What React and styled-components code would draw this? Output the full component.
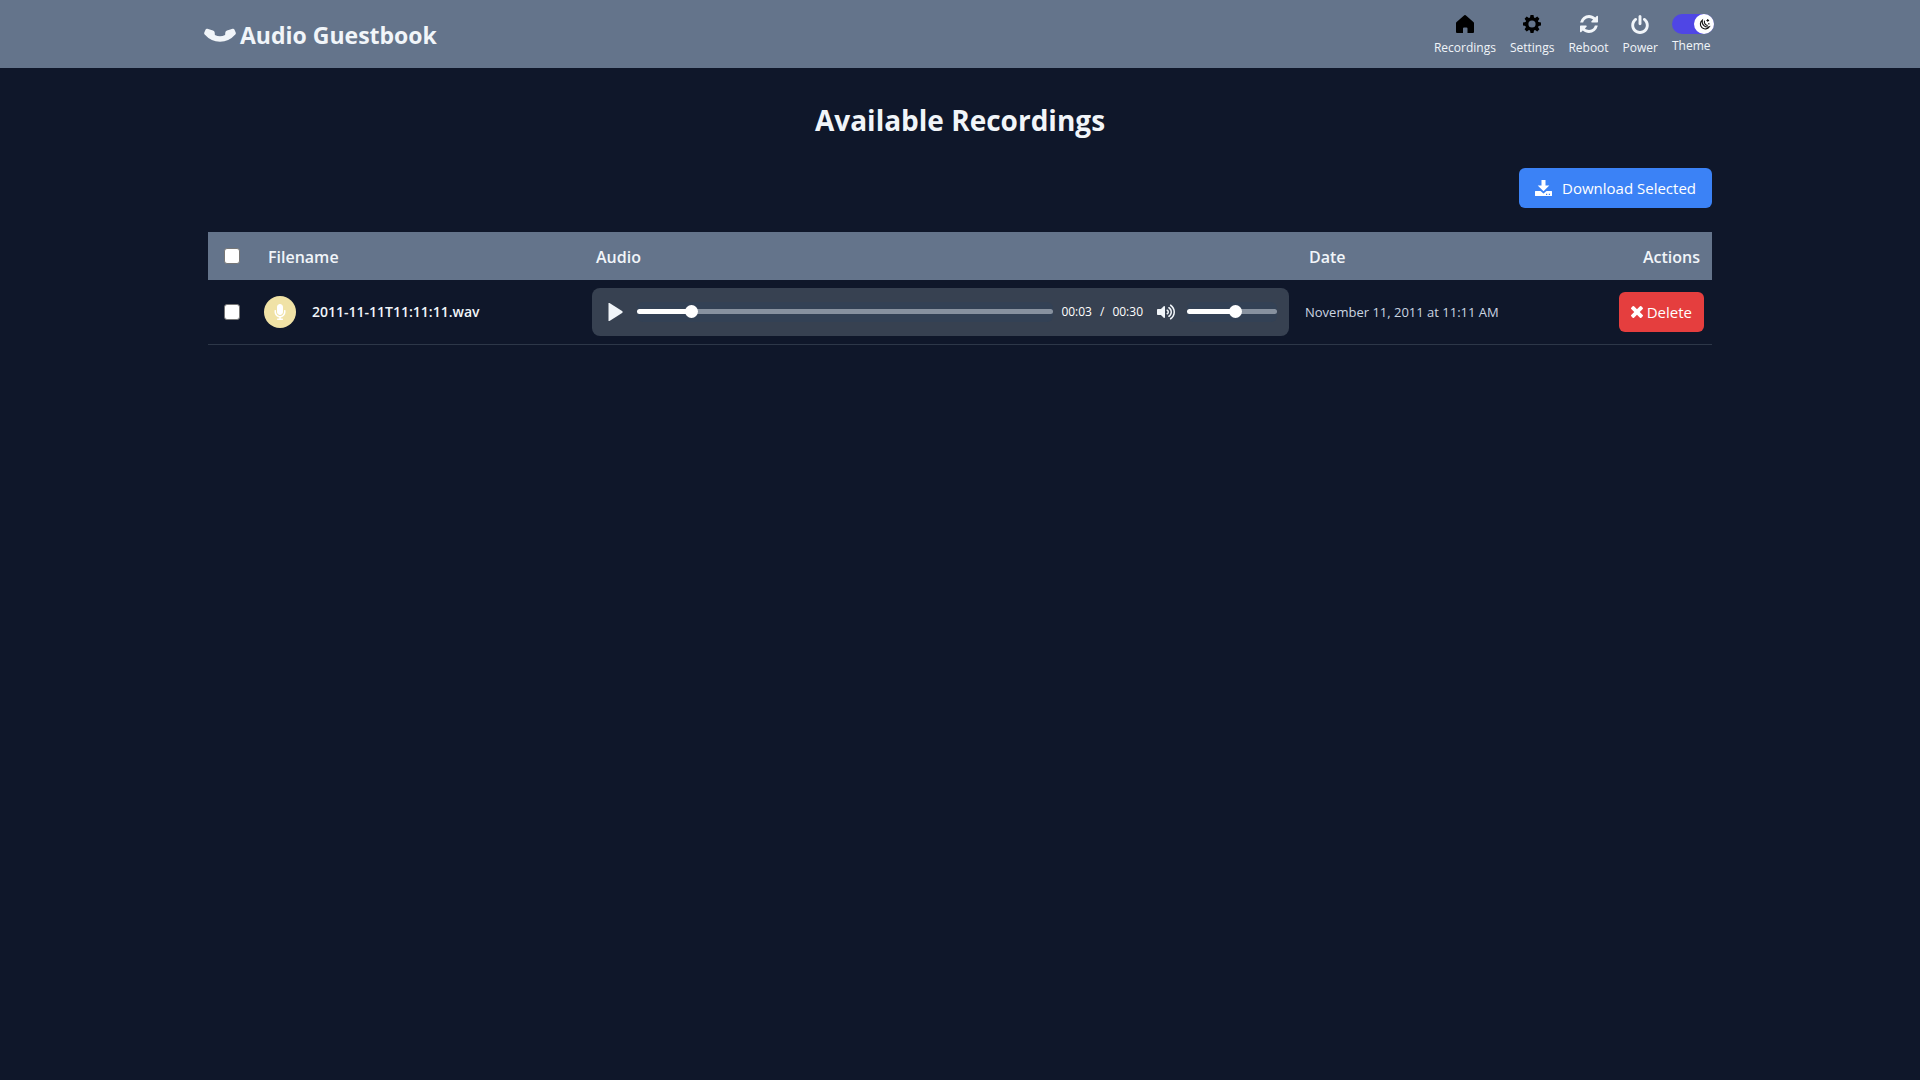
import React, { useState } from "react";
import styled, { createGlobalStyle, css } from "styled-components";
import { FaMicrophone, FaVolumeUp } from "react-icons/fa";

const Global = createGlobalStyle`
  *, *::before, *::after { box-sizing: border-box; }
  body {
    margin: 0;
    background: #0f172a;
    color: #f1f5f9;
    font-family: "Segoe UI", "Open Sans", "Noto Sans", sans-serif;
    font-size: 16px;
    line-height: 24px;
  }
  button { font: inherit; color: inherit; border: 0; cursor: pointer; }
`;

const Header = styled.header`
  background: #64748b;
  padding: 12px 0;
`;

const HeaderInner = styled.div`
  display: flex;
  align-items: center;
  justify-content: space-between;
  max-width: 1536px;
  margin: 0 auto;
  padding: 0 14px 0 12px;
`;

const Brand = styled.a`
  display: flex;
  align-items: center;
  gap: 4px;
  padding-top: 2px;
  color: #f1f5f9;
  font-size: 23px;
  font-weight: 700;
  line-height: 32px;
  text-decoration: none;
`;

const Nav = styled.nav`
  display: flex;
  align-items: flex-start;
  gap: 14px;
`;

const navItem = css`
  display: flex;
  flex-direction: column;
  align-items: center;
  gap: 4px;
  padding: 0;
  background: none;
  color: #f1f5f9;
  font-size: 12px;
  line-height: 16px;
  text-decoration: none;
`;
const NavLink = styled.a`${navItem}`;
const NavButton = styled.button`
  && {
    ${navItem}
  }
`;
const ThemeItem = styled.label`
  ${navItem}
  position: relative;
  align-items: flex-start;
  gap: 2px;
  cursor: pointer;
`;
const IconSlot = styled.span`
  display: flex;
  align-items: center;
  justify-content: center;
  height: 24px;
  color: ${(p) => (p.$dark ? "#000" : "inherit")};
`;

const SwitchTrack = styled.span`
  display: flex;
  justify-content: ${(p) => (p.$on ? "flex-end" : "flex-start")};
  width: 42px;
  height: 20px;
  border-radius: 10px;
  background: ${(p) => (p.$on ? "#4f46e5" : "#e5e7eb")};
`;
const SwitchKnob = styled.span`
  display: grid;
  place-items: center;
  width: 20px;
  height: 20px;
  border-radius: 50%;
  background: #fff;
  color: #111;
`;
const HiddenCheck = styled.input`
  position: absolute;
  opacity: 0;
  width: 1px;
  height: 1px;
  margin: 0;
`;

const Main = styled.main`
  max-width: 1536px;
  margin: 0 auto;
  padding: 32px 16px;
`;

const Title = styled.h1`
  margin: 0 0 28px;
  font-size: 28px;
  font-weight: 700;
  line-height: 40px;
  text-align: center;
`;

const Toolbar = styled.div`
  display: flex;
  justify-content: flex-end;
  margin-bottom: 24px;
`;

const Button = styled.button`
  display: inline-flex;
  align-items: center;
  gap: ${(p) => (p.$danger ? 4 : 10)}px;
  height: 40px;
  padding: 0 ${(p) => (p.$danger ? 12 : 16)}px;
  border-radius: 6px;
  background: ${(p) => (p.$danger ? "#e53e3e" : "#3b82f6")};
  && { color: #fff; font-size: 15px; }
`;

const Table = styled.table`
  width: 100%;
  table-layout: fixed;
  border-collapse: collapse;
`;
const Col = styled.col`
  width: ${(p) => p.$w};
`;
const Th = styled.th`
  height: 48px;
  padding: 2px 12px 0;
  background: #64748b;
  font-weight: 600;
  text-align: ${(p) => p.$align || "left"};
`;
const CheckTh = styled(Th)`
  padding: 0 8px;
`;
const Td = styled.td`
  height: 64px;
  padding: 0 8px;
  border-bottom: 1px solid #2d3748;
  text-align: ${(p) => p.$align || "left"};
`;
const Check = styled.input`
  display: block;
  width: 16px;
  height: 16px;
  margin: 0 auto;
  appearance: none;
  border: 1px solid #767676;
  border-radius: 3px;
  background: #fff;
  &:checked { background: #3b82f6; }
`;
const FileCell = styled.div`
  display: flex;
  align-items: center;
  gap: 16px;
  font-size: 14px;
  font-weight: 600;
`;
const Avatar = styled.span`
  display: grid;
  place-items: center;
  width: 32px;
  height: 32px;
  border-radius: 50%;
  background: #f0e2a6;
  color: #fff;
`;
const DateText = styled.time`
  color: #cbd5e1;
  font-size: 13px;
`;

const Player = styled.div`
  display: flex;
  align-items: center;
  height: 48px;
  padding: 0 12px 0 16px;
  border-radius: 8px;
  background: #374151;
`;
const IconButton = styled.button`
  display: grid;
  place-items: center;
  padding: 0;
  background: none;
`;
const Slider = styled.input`
  flex: ${(p) => (p.$fixed ? "0 0 90px" : "1 1 0")};
  min-width: 0;
  height: 20px;
  margin: 0 ${(p) => (p.$fixed ? 0 : 8)}px 0 ${(p) => (p.$fixed ? 12 : 14)}px;
  appearance: none;
  border-radius: 6px;
  background: #334155;
  &::-webkit-slider-runnable-track {
    height: 5px;
    border-radius: 3px;
    background: linear-gradient(to right, #fff var(--fill), #87919f var(--fill));
  }
  &::-webkit-slider-thumb {
    appearance: none;
    width: 13px;
    height: 13px;
    margin-top: -4px;
    border-radius: 50%;
    background: #fff;
  }
`;
const Time = styled.span`
  display: flex;
  gap: 8px;
  margin-right: 14px;
  color: #fff;
  font-size: 12px;
`;

function Glyph({ width = 18, height = 18, box, children }) {
  return (
    <svg width={width} height={height} viewBox={box} fill="currentColor" aria-hidden="true">
      {children}
    </svg>
  );
}

const HomeIcon = () => (
  <Glyph box="0 0 18 18">
    <path d="M8.300.300Q9-.3 9.700.300L17.400 7Q18 7.500 18 8.300V17Q18 18 17 18H11.500V13.500Q11.500 12.500 10.500 12.500H8Q7 12.500 7 13.500V18H1Q0 18 0 17V8.300Q0 7.500.600 7Z" />
  </Glyph>
);

const GearIcon = () => (
  <Glyph box="-9 -9 18 18">
    {[0, 45, 90, 135].map((angle) => (
      <path key={angle} transform={`rotate(${angle})`} d="M-1.500-9H1.500L2.200-5.500H-2.200ZM-1.500 9H1.500L2.200 5.500H-2.200Z" />
    ))}
    <circle r="5.200" fill="none" stroke="currentColor" strokeWidth="3.200" />
  </Glyph>
);

const RefreshIcon = () => (
  <Glyph box="0 0 1536 1536">
    <path d="M1511 928q0 5-1 7-64 268-268 434.500t-478 166.500q-146 0-282.500-55t-243.500-157l-129 129q-19 19-45 19t-45-19-19-45v-448q0-26 19-45t45-19h448q26 0 45 19t19 45-19 45l-137 137q71 66 161 102t187 36q134 0 250-65t186-179q11-17 53-117 8-23 30-23h192q13 0 22.500 9.500t9.500 22.500zm25-800v448q0 26-19 45t-45 19h-448q-26 0-45-19t-19-45 19-45l138-138q-148-137-349-137-134 0-250 65t-186 179q-11 17-53 117-8 23-30 23h-199q-13 0-22.500-9.500t-9.500-22.500v-7q65-268 270-434.500t480-166.500q146 0 284 55.500t245 156.500l130-129q19-19 45-19t45 19 19 45z" />
  </Glyph>
);

const PowerIcon = () => (
  <Glyph height={19} box="0 0 1536 1664">
    <path d="M1536 896q0 156-61 298t-164 245-245 164-298 61-298-61-245-164-164-245-61-298q0-182 80.500-343t226.500-270q43-32 95.500-25t83.500 50q32 42 24.500 94.500t-49.500 84.500q-98 74-151.500 181t-53.500 228q0 104 40.500 198.500t109.500 163.500 163.500 109.500 198.500 40.500 198.500-40.500 163.500-109.500 109.500-163.500 40.500-198.500q0-121-53.500-228t-151.500-181q-42-32-49.500-84.500t24.500-94.500q31-43 84-50t95 25q146 109 226.500 270t80.500 343zm-640-768v640q0 52-38 90t-90 38-90-38-38-90v-640q0-52 38-90t90-38 90 38 38 90z" />
  </Glyph>
);

const MoonIcon = () => (
  <svg width="13" height="13" viewBox="0 0 24 24" fill="none" stroke="currentColor" strokeWidth="2" aria-hidden="true">
    <path d="M8 4a9 9 0 1 0 13 12A10 10 0 0 1 8 4ZM12 5a7 7 0 0 0 6 9M18 2v5M15.500 4.500h5M20 9v3" />
  </svg>
);

const DownloadIcon = () => (
  <Glyph width={17} height={16} box="0 0 17 16">
    <path d="M6.500 0H10.500V5.500H14.300L8.500 11.300 2.700 5.500H6.500Z" />
    <path fillRule="evenodd" d="M.5 11H5.500L8.500 13.500 11.500 11H16.500Q17 11 17 11.500V15.500Q17 16 16.500 16H.5Q0 16 0 15.500V11.500Q0 11 .5 11ZM11 13.700V14.900H12.200V13.700ZM13.800 13.700V14.900H15V13.700Z" />
  </Glyph>
);

const CrossIcon = () => (
  <Glyph width={12} height={12} box="110 366 1188 1188">
    <path d="M1298 1254q0 40-28 68l-136 136q-28 28-68 28t-68-28l-294-294-294 294q-28 28-68 28t-68-28l-136-136q-28-28-28-68t28-68l294-294-294-294q-28-28-28-68t28-68l136-136q28-28 68-28t68 28l294 294 294-294q28-28 68-28t68 28l136 136q28 28 28 68t-28 68l-294 294 294 294q28 28 28 68z" transform="translate(0 68)" />
  </Glyph>
);

const PlayIcon = () => (
  <Glyph width={15} box="0 0 15 18">
    <path d="M.5 0 1.500 0 14.500 8.300V9.700L1.500 18H.5Z" />
  </Glyph>
);

const Handset = () => (
  <Glyph width={32} height={14} box="0 0 32 14">
    <path d="M3.400.8 9 2.500Q10.500 3 10.700 4.500L10.900 7Q16 9.600 21.100 7L21.300 4.500Q21.500 3 23 2.500L28.600.8Q29.800.4 30.400 1.500L31.600 4.300Q32.200 5.500 31.300 6.600Q25 13.800 16 13.800T.7 6.600Q-.2 5.500.4 4.300L1.600 1.500Q2.200.4 3.400.8Z" />
  </Glyph>
);

export default function App() {
  const [dark, setDark] = useState(true);
  const [position, setPosition] = useState(12);
  const [volume, setVolume] = useState(55);
  return (
    <>
      <Global />
      <Header>
        <HeaderInner>
          <Brand href="#"><Handset />Audio Guestbook</Brand>
          <Nav>
            <NavLink href="#recordings"><IconSlot $dark><HomeIcon /></IconSlot>Recordings</NavLink>
            <NavLink href="#settings"><IconSlot $dark><GearIcon /></IconSlot>Settings</NavLink>
            <NavButton type="button"><IconSlot><RefreshIcon /></IconSlot>Reboot</NavButton>
            <NavButton type="button"><IconSlot><PowerIcon /></IconSlot>Power</NavButton>
            <ThemeItem>
              <HiddenCheck type="checkbox" checked={dark} onChange={(e) => setDark(e.target.checked)} />
              <IconSlot>
                <SwitchTrack $on={dark}>
                  <SwitchKnob><MoonIcon /></SwitchKnob>
                </SwitchTrack>
              </IconSlot>
              Theme
            </ThemeItem>
          </Nav>
        </HeaderInner>
      </Header>
      <Main>
        <Title>Available Recordings</Title>
        <Toolbar>
          <Button type="button"><DownloadIcon />Download Selected</Button>
        </Toolbar>
        <Table>
          <colgroup>
            <Col $w="48px" /><Col $w="328px" /><Col /><Col $w="303px" /><Col $w="112px" />
          </colgroup>
          <thead>
            <tr>
              <CheckTh><Check type="checkbox" aria-label="Select all recordings" /></CheckTh>
              <Th>Filename</Th>
              <Th>Audio</Th>
              <Th>Date</Th>
              <Th $align="right">Actions</Th>
            </tr>
          </thead>
          <tbody>
            <tr>
              <Td><Check type="checkbox" aria-label="Select 2011-11-11T11:11:11.wav" /></Td>
              <Td><FileCell><Avatar><FaMicrophone size={16} /></Avatar>2011-11-11T11:11:11.wav</FileCell></Td>
              <Td>
                <Player>
                  <IconButton type="button" aria-label="Play"><PlayIcon /></IconButton>
                  <Slider type="range" aria-label="Seek" value={position} onChange={(e) => setPosition(+e.target.value)} style={{ "--fill": `${position}%` }} />
                  <Time><span>00:03</span><span>/</span><span>00:30</span></Time>
                  <IconButton type="button" aria-label="Mute"><FaVolumeUp size={18} /></IconButton>
                  <Slider $fixed type="range" aria-label="Volume" value={volume} onChange={(e) => setVolume(+e.target.value)} style={{ "--fill": `${volume}%` }} />
                </Player>
              </Td>
              <Td><DateText dateTime="2011-11-11T11:11">November 11, 2011 at 11:11 AM</DateText></Td>
              <Td $align="right"><Button $danger type="button"><CrossIcon />Delete</Button></Td>
            </tr>
          </tbody>
        </Table>
      </Main>
    </>
  );
}
